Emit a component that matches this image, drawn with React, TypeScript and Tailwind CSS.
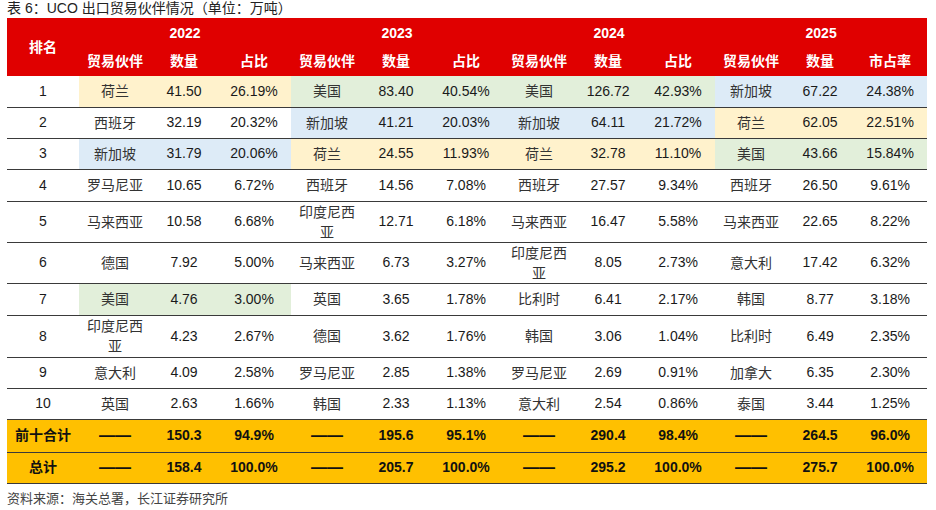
import React from 'react';

type Hl = '' | 'y' | 'g' | 'b';

interface Entry {
  name: string;
  qty: string;
  pct: string;
  hl?: Hl;
}

interface Row {
  rank: string;
  h: string;
  cells: Entry[];
}

const hlClass: Record<Hl, string> = {
  '': '',
  y: 'bg-[#fff2cc]',
  g: 'bg-[#e2efda]',
  b: 'bg-[#ddebf7]',
};

const rows: Row[] = [
  {
    rank: '1',
    h: 'h-[31px]',
    cells: [
      { name: '荷兰', qty: '41.50', pct: '26.19%', hl: 'y' },
      { name: '美国', qty: '83.40', pct: '40.54%', hl: 'g' },
      { name: '美国', qty: '126.72', pct: '42.93%', hl: 'g' },
      { name: '新加坡', qty: '67.22', pct: '24.38%', hl: 'b' },
    ],
  },
  {
    rank: '2',
    h: 'h-[31px]',
    cells: [
      { name: '西班牙', qty: '32.19', pct: '20.32%' },
      { name: '新加坡', qty: '41.21', pct: '20.03%', hl: 'b' },
      { name: '新加坡', qty: '64.11', pct: '21.72%', hl: 'b' },
      { name: '荷兰', qty: '62.05', pct: '22.51%', hl: 'y' },
    ],
  },
  {
    rank: '3',
    h: 'h-[31px]',
    cells: [
      { name: '新加坡', qty: '31.79', pct: '20.06%', hl: 'b' },
      { name: '荷兰', qty: '24.55', pct: '11.93%', hl: 'y' },
      { name: '荷兰', qty: '32.78', pct: '11.10%', hl: 'y' },
      { name: '美国', qty: '43.66', pct: '15.84%', hl: 'g' },
    ],
  },
  {
    rank: '4',
    h: 'h-[32px]',
    cells: [
      { name: '罗马尼亚', qty: '10.65', pct: '6.72%' },
      { name: '西班牙', qty: '14.56', pct: '7.08%' },
      { name: '西班牙', qty: '27.57', pct: '9.34%' },
      { name: '西班牙', qty: '26.50', pct: '9.61%' },
    ],
  },
  {
    rank: '5',
    h: 'h-[41px]',
    cells: [
      { name: '马来西亚', qty: '10.58', pct: '6.68%' },
      { name: '印度尼西亚', qty: '12.71', pct: '6.18%' },
      { name: '马来西亚', qty: '16.47', pct: '5.58%' },
      { name: '马来西亚', qty: '22.65', pct: '8.22%' },
    ],
  },
  {
    rank: '6',
    h: 'h-[41px]',
    cells: [
      { name: '德国', qty: '7.92', pct: '5.00%' },
      { name: '马来西亚', qty: '6.73', pct: '3.27%' },
      { name: '印度尼西亚', qty: '8.05', pct: '2.73%' },
      { name: '意大利', qty: '17.42', pct: '6.32%' },
    ],
  },
  {
    rank: '7',
    h: 'h-[32px]',
    cells: [
      { name: '美国', qty: '4.76', pct: '3.00%', hl: 'g' },
      { name: '英国', qty: '3.65', pct: '1.78%' },
      { name: '比利时', qty: '6.41', pct: '2.17%' },
      { name: '韩国', qty: '8.77', pct: '3.18%' },
    ],
  },
  {
    rank: '8',
    h: 'h-[42px]',
    cells: [
      { name: '印度尼西亚', qty: '4.23', pct: '2.67%' },
      { name: '德国', qty: '3.62', pct: '1.76%' },
      { name: '韩国', qty: '3.06', pct: '1.04%' },
      { name: '比利时', qty: '6.49', pct: '2.35%' },
    ],
  },
  {
    rank: '9',
    h: 'h-[31px]',
    cells: [
      { name: '意大利', qty: '4.09', pct: '2.58%' },
      { name: '罗马尼亚', qty: '2.85', pct: '1.38%' },
      { name: '罗马尼亚', qty: '2.69', pct: '0.91%' },
      { name: '加拿大', qty: '6.35', pct: '2.30%' },
    ],
  },
  {
    rank: '10',
    h: 'h-[31px]',
    cells: [
      { name: '英国', qty: '2.63', pct: '1.66%' },
      { name: '韩国', qty: '2.33', pct: '1.13%' },
      { name: '意大利', qty: '2.54', pct: '0.86%' },
      { name: '泰国', qty: '3.44', pct: '1.25%' },
    ],
  },
];

const totals = [
  { label: '前十合计', h: 'h-[33px]', vals: [['150.3', '94.9%'], ['195.6', '95.1%'], ['290.4', '98.4%'], ['264.5', '96.0%']] },
  { label: '总计', h: 'h-[31px]', vals: [['158.4', '100.0%'], ['205.7', '100.0%'], ['295.2', '100.0%'], ['275.7', '100.0%']] },
];

const years = ['2022', '2023', '2024', '2025'];

export default function App() {
  return (
    <div
      className="w-[936px] h-[510px] bg-white text-[#1a1a1a] overflow-hidden"
      style={{ fontFamily: '"Liberation Sans", "Noto Sans CJK SC", sans-serif' }}
    >
      {/* Title */}
      <div className="h-[18px] pl-[7px] text-[14px] leading-[17px] text-[#222]">
        表 6：UCO 出口贸易伙伴情况（单位：万吨）
      </div>

      <table className="ml-[7px] w-[919px] table-fixed border-collapse text-center text-[14px]">
        <colgroup>
          <col className="w-[72px]" />
          {years.map((y) => (
            <React.Fragment key={y}>
              <col className="w-[72px]" />
              <col className="w-[66px]" />
              <col className="w-[74px]" />
            </React.Fragment>
          ))}
        </colgroup>
        <thead>
          <tr className="h-[29px] bg-[#e00000] text-white font-bold">
            <th rowSpan={2} className="align-middle font-bold">排名</th>
            {years.map((y) => (
              <th key={y} colSpan={3} className="font-bold pt-[2px]">
                {y}
              </th>
            ))}
          </tr>
          <tr className="h-[29px] bg-[#e00000] text-white">
            {years.map((y) => (
              <React.Fragment key={y}>
                <th className="font-bold">贸易伙伴</th>
                <th className="font-bold">数量</th>
                <th className="font-bold">{y === '2025' ? '市占率' : '占比'}</th>
              </React.Fragment>
            ))}
          </tr>
        </thead>
        <tbody>
          {rows.map((r) => (
            <tr key={r.rank} className={`${r.h} border-b border-[#3a3a3a]`}>
              <td>{r.rank}</td>
              {r.cells.map((c, i) => {
                const bg = hlClass[c.hl ?? ''];
                return (
                  <React.Fragment key={i}>
                    <td className={`${bg} px-[4px] leading-[20px] text-[#333]`}>{c.name}</td>
                    <td className={bg}>{c.qty}</td>
                    <td className={bg}>{c.pct}</td>
                  </React.Fragment>
                );
              })}
            </tr>
          ))}
          {totals.map((t) => (
            <tr key={t.label} className={`${t.h} bg-[#ffc000] border-b border-[#3a3a3a] font-bold text-[#111]`}>
              <td>{t.label}</td>
              {t.vals.map((v, i) => (
                <React.Fragment key={i}>
                  <td className="text-[16px]">——</td>
                  <td>{v[0]}</td>
                  <td>{v[1]}</td>
                </React.Fragment>
              ))}
            </tr>
          ))}
        </tbody>
      </table>

      {/* Source note */}
      <div className="pl-[7px] pt-[6px] text-[13px] leading-[17px] text-[#444]">
        资料来源：海关总署，长江证券研究所
      </div>
    </div>
  );
}
